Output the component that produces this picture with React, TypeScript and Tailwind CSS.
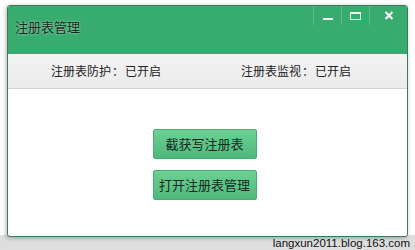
import React from "react";

export default function App() {
  const cjk = { fontFamily: '"Noto Sans CJK SC", "Noto Sans", sans-serif' };
  return (
    <div className="w-[415px] h-[250px] bg-white flex flex-col relative overflow-hidden" style={cjk}>
      <div className="absolute left-0 right-0 bottom-0 h-[15px] bg-[#dedede]" />
      <div className="relative ml-[7px] mt-[5px] w-[401px] h-[232px] rounded-[3px] border border-[#3d7a5c] bg-white flex flex-col overflow-hidden shadow-[-1px_1px_4px_rgba(0,0,0,0.3)]">
        <div className="h-[48px] bg-[#38ab6e] flex items-start justify-between">
          <div className="pl-[7px] pt-[12px] text-[13px] leading-[18px] text-[#1e2a22] [text-shadow:0_0_3px_rgba(255,255,255,0.6)]">
            注册表管理
          </div>
          <div className="flex h-[19px] mr-[-1px]">
            <div className="w-[28px] border-l border-[#5abb86] flex items-center justify-center">
              <div className="w-[10px] h-[2px] bg-[#f2f2f2] mt-[6px]" />
            </div>
            <div className="w-[28px] border-l border-[#5abb86] flex items-center justify-center">
              <div className="w-[11px] h-[8px] border-[1.5px] border-[#f2f2f2] border-t-2" />
            </div>
            <div className="w-[39px] border-l border-[#5abb86] flex items-center justify-center">
              <svg width="10" height="9" viewBox="0 0 10 9">
                <path d="M1.5 1 L8.5 8 M8.5 1 L1.5 8" stroke="#f2f2f2" strokeWidth="2.2" />
              </svg>
            </div>
          </div>
        </div>
        <div className="h-[35px] bg-gradient-to-b from-[#f3f3f3] to-[#ebebeb] border-b border-[#d4d4d4] flex items-center text-[12px] text-[#222]">
          <div className="ml-[43px] w-[190px]">注册表防护<span className="mx-[1px]">：</span>已开启</div>
          <div>注册表监视<span className="mx-[1px]">：</span>已开启</div>
        </div>
        <div className="flex flex-col items-center pt-[40px] gap-[11px] pr-[6px]">
          <div className="w-[104px] h-[30px] rounded-[2px] bg-gradient-to-b from-[#6dd094] to-[#4db97a] border border-[#48ad73] flex items-center justify-center text-[13px] text-[#1a2a1f]">
            截获写注册表
          </div>
          <div className="w-[104px] h-[30px] rounded-[2px] bg-gradient-to-b from-[#6dd094] to-[#4db97a] border border-[#48ad73] flex items-center justify-center text-[13px] text-[#1a2a1f]">
            打开注册表管理
          </div>
        </div>
      </div>
      <div
        className="absolute right-[5px] bottom-[-1px] text-[11.5px] leading-[15px] text-[#111]"
        style={{ fontFamily: '"Liberation Sans", Arial, sans-serif' }}
      >
        langxun2011.blog.163.com
      </div>
    </div>
  );
}
